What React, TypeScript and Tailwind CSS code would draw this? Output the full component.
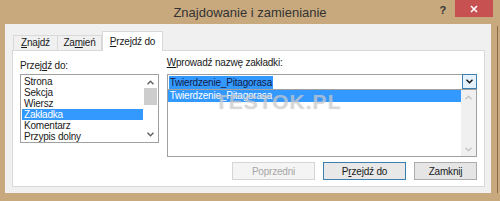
import React from 'react';

const font = { fontFamily: '"Liberation Sans", Arial, sans-serif' };

function Chevron({ up = false, color = '#606060', className = '' }: { up?: boolean; color?: string; className?: string }) {
  return (
    <svg width="7" height="5" viewBox="0 0 7 5" className={className}>
      <path
        d={up ? 'M0.5 4.2 L3.5 1.2 L6.5 4.2' : 'M0.5 0.8 L3.5 3.8 L6.5 0.8'}
        fill="none"
        stroke={color}
        strokeWidth="1.4"
      />
    </svg>
  );
}

const goToItems = ['Strona', 'Sekcja', 'Wiersz', 'Zakładka', 'Komentarz', 'Przypis dolny'];

export default function App() {
  return (
    <div
      className="w-[500px] h-[201px] bg-[#c8a97e] flex flex-col overflow-hidden text-[10px] tracking-[-0.2px] text-[#1a1a1a]"
      style={font}
    >
      {/* Title bar */}
      <div className="h-[24px] grid grid-cols-[1fr_auto_1fr]">
        <div />
        <div className="text-[13px] tracking-normal text-[#333] pt-[5px] leading-[16px]">
          Znajdowanie i zamienianie
        </div>
        <div className="flex justify-end items-start">
          <span className="text-[11px] font-bold text-[#333] mt-[4px] mr-[9px] leading-[12px]">?</span>
          <div className="w-[38px] h-[17px] bg-[#c75050] flex items-center justify-center mr-[7px] text-white">
            <svg width="8" height="8" viewBox="0 0 8 8">
              <path d="M1 1 L7 7 M7 1 L1 7" stroke="#fff" strokeWidth="1.6" />
            </svg>
          </div>
        </div>
      </div>

      {/* Body */}
      <div className="flex h-[169px]">
        <div className="w-[5px]" />
        <div className="w-[486px] bg-[#f0f0f0] flex flex-col px-[7px] pr-[6px] pt-[7px] pb-[6px]">
          {/* Tabs */}
          <div className="flex items-end pl-[1px] h-[19px] relative z-10">
            <div className="w-[45px] h-[15px] border border-b-0 border-[#d9d9d9] bg-[#f0f0f0] flex items-center justify-center leading-[12px]">
              <span><span className="underline">Z</span>najdź</span>
            </div>
            <div className="w-[44px] h-[15px] border border-b-0 border-l-0 border-[#d9d9d9] bg-[#f0f0f0] flex items-center justify-center leading-[12px]">
              <span>Za<span className="underline">m</span>ień</span>
            </div>
            <div className="w-[61px] h-[20px] -mb-[1px] border border-b-0 border-[#d9d9d9] bg-white flex items-center justify-center leading-[12px]">
              <span><span className="underline">P</span>rzejdź do</span>
            </div>
          </div>

          {/* Panel */}
          <div className="flex-1 bg-white border border-[#d9d9d9] flex flex-col px-[7px]">
            <div className="flex gap-[8px] relative">
              {/* Left column */}
              <div className="w-[139px] flex flex-col">
                <div className="mt-[8px] mb-[1px] leading-[14px]">
                  Przej<span className="underline">d</span>ź do:
                </div>
                <div className="h-[69px] border border-[#a0a0a0] flex">
                  <div className="flex-1 pt-[1px]">
                    {goToItems.map((item) => (
                      <div
                        key={item}
                        className={`h-[11px] leading-[11px] pl-[2px] ml-[1px] ${
                          item === 'Zakładka' ? 'bg-[#3399ff] text-white' : ''
                        }`}
                      >
                        {item}
                      </div>
                    ))}
                  </div>
                  <div className="w-[15px] flex flex-col items-center">
                    <Chevron up className="mt-[5px]" />
                    <div className="w-[13px] h-[17px] bg-[#cdcdcd] mt-[3px]" />
                    <div className="flex-1" />
                    <Chevron className="mb-[5px]" />
                  </div>
                </div>
              </div>

              {/* Right column */}
              <div className="w-[311px] flex flex-col">
                <div className="mt-[5px] mb-[4px] leading-[14px]">
                  <span className="underline">W</span>prowadź nazwę zakładki:
                </div>
                <div className="h-[16px] border border-[#a0a0a0] flex items-center">
                  <div className="flex-1 pl-[1px]">
                    <span className="bg-[#3399ff] text-[#10204a] px-[1px] leading-[13px] inline-block">
                      Twierdzenie_Pitagorasa
                    </span>
                  </div>
                  <div className="w-[15px] h-[15px] -mr-[1px] -mt-[1px] bg-[#e5f1fb] border border-[#3c7fb1] flex items-center justify-center">
                    <Chevron color="#111" />
                  </div>
                </div>
                <div className="h-[67px] border border-t-0 border-[#a0a0a0] flex">
                  <div className="flex-1">
                    <div className="h-[12px] leading-[12px] bg-[#3399ff] text-white pl-[2px]">
                      Twierdzenie_Pitagorasa
                    </div>
                  </div>
                  <div className="w-[15px] bg-[#f0f0f0] flex flex-col items-center">
                    <Chevron up color="#c4c4c4" className="mt-[5px]" />
                    <div className="flex-1" />
                    <Chevron color="#c4c4c4" className="mb-[4px]" />
                  </div>
                </div>
              </div>

              {/* Watermark */}
              <div className="absolute left-[195px] top-[40px] text-[21px] leading-[22px] font-bold tracking-[1px] text-[rgba(225,225,225,0.55)] [text-shadow:0_0_1px_rgba(140,140,140,0.45)] pointer-events-none">
                TESTOK.PL
              </div>
            </div>

            {/* Buttons */}
            <div className="flex justify-end gap-[8px] mt-[5px]">
              <div className="w-[83px] h-[18px] border border-[#d5d5d5] bg-[#f4f4f4] text-[#a6a6a6] flex items-center justify-center">
                Poprzedni
              </div>
              <div className="w-[83px] h-[18px] border border-[#3c7fb1] bg-[#e8e8e8] flex items-center justify-center">
                <span>P<span className="underline">r</span>zejdź do</span>
              </div>
              <div className="w-[63px] h-[18px] border border-[#acacac] bg-[#e5e5e5] flex items-center justify-center">
                Zamknij
              </div>
            </div>
          </div>
        </div>
        <div className="w-[6px]" />
        <div className="w-[1px] bg-[#8a6d48] mt-[2px]" />
      </div>
    </div>
  );
}
